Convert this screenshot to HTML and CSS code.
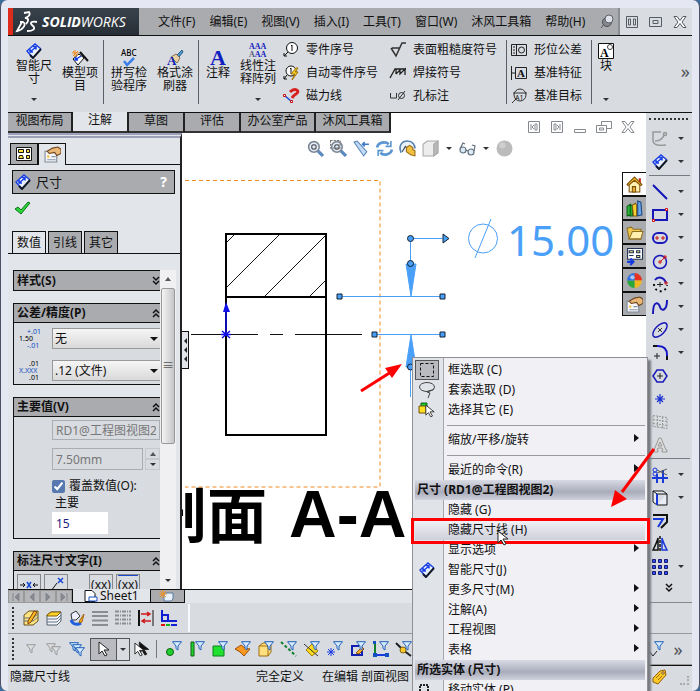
FILE: index.html
```html
<!DOCTYPE html>
<html lang="zh-CN">
<head>
  <meta charset="UTF-8" />
  <title>SOLIDWORKS</title>
  <link rel="stylesheet" href="styles.css">
</head>
<body>
  <svg class="defs" width="0" height="0" aria-hidden="true">
    <symbol id="dim" viewBox="0 0 16 16">
      <path d="M1 8l8-7 6 5-8 9z" fill="#e8f0ff"/>
      <path d="M7 15L1 8l8-7 6 5" fill="none" stroke="#1c40e0" stroke-width="1.500"/>
      <path d="M4 12l3 3 8-9" fill="none" stroke="#101828" stroke-width="2"/>
      <path d="M4 9l6-5M4 6v3h3M7 3.500h3v3" fill="none" stroke="#1840e8" stroke-width="1.500"/>
    </symbol>
    <symbol id="funnel" viewBox="0 0 10 10">
      <path d="M.5.7h9L6 5v4L4 7.500V5z" fill="#d8ecff" stroke="#2060b8"/>
    </symbol>
    <symbol id="funnel-gray" viewBox="0 0 10 10">
      <path d="M.5.7h9L6 5v4L4 7.500V5z" fill="#ddd" stroke="#9a9ca0"/>
    </symbol>
    <symbol id="lens" viewBox="0 0 16 16">
      <path d="M10 10l5 5" stroke="#5c88c0" stroke-width="3"/>
      <circle cx="6.500" cy="6.500" r="5" fill="#e6ecf2" stroke="#7d8998" stroke-width="1.500"/>
      <path d="M4.500 5.500l1-1h2l1 1v2l-1 1h-2l-1-1z" fill="none" stroke="#555b66" stroke-width="1.200"/>
    </symbol>
    <symbol id="pointer" viewBox="0 0 12 16">
      <path d="M1 1v12l3-3 3 5 2-1-3-5h5z" stroke="#222"/>
    </symbol>
    <symbol id="chev" viewBox="0 0 8 10">
      <path d="M1 1l3 3 3-3M1 5l3 3 3-3" fill="none" stroke="#111" stroke-width="1.500"/>
    </symbol>
    <symbol id="hand" viewBox="0 0 16 16">
      <path d="M1 5h11v10H1z" fill="#f5f7fa" stroke="#7c8794"/>
      <path d="M3 9h2v2H3z" fill="#f8c030"/>
      <path d="M7 10h4M3 13h8" stroke="#8896a8"/>
      <path d="M3 5l5-3 5-1 3 2v4l-4 2-2-3-5 1z" fill="#e8b878" stroke="#70441c"/>
    </symbol>
    <symbol id="views" viewBox="0 0 16 16">
      <path d="M.5 1.500h15v13H.5z" fill="#fff" stroke="#111"/>
      <path d="M2.500 3.500h5v3h-5zM10.500 3.500h3v3h-3zM10.500 9.500h3v3h-3zM2.500 12.500l1-3h3l1 3z" fill="#ffe040" stroke="#111"/>
    </symbol>
  </svg>

  <div class="window">
    <header class="titlebar">
      <div class="logo">
        <svg width="22" height="22" viewBox="0 0 22 22" fill="none" stroke="#fff" stroke-width="1.800">
          <path d="M8 2l5-1c2 3-1 5-4 6 4 0 4 3 1 6M4 11l3 0c4 2 0 8-6 9l5-9M21 11c-6-1-8 1-4 4 3 3 0 5-6 5"/>
        </svg>
        <span><b>SOLID</b>WORKS</span>
      </div>
      <nav class="menubar">
        <a href="#">文件(F)</a>
        <a href="#">编辑(E)</a>
        <a href="#">视图(V)</a>
        <a href="#">插入(I)</a>
        <a href="#">工具(T)</a>
        <a href="#">窗口(W)</a>
        <a href="#">沐风工具箱</a>
        <a href="#">帮助(H)</a>
        <button aria-label="固定"><svg width="16" height="16" viewBox="0 0 16 16"><path d="M6 9l-4 5" stroke="#555"/><circle cx="8" cy="8" r="4.500" fill="#85888e" stroke="#4b4e54"/><circle cx="10" cy="5" r="4" fill="#dfe2e8" stroke="#5c6068"/></svg></button>
      </nav>
      <div class="window-buttons">
        <button aria-label="平铺"><svg width="14" height="14" viewBox="0 0 14 14" fill="none" stroke="#565a62"><path d="M1.500 1.500h11v11h-11zM3.500 4h2v6h-2zM8.500 4h2v6h-2z"/></svg></button>
        <button aria-label="还原"><svg width="14" height="14" viewBox="0 0 14 14" fill="none" stroke="#565a62"><path d="M.5 2.500h12v9H.5zM4 5.500h5v3H4z"/></svg></button>
        <button aria-label="关闭"><svg width="14" height="14" viewBox="0 0 14 14"><path d="M1 1.500h3l3 4 3-4h3L9 7l4 5.500h-3l-3-4-3 4H1L5 7z" fill="#fff" stroke="#565a62"/></svg></button>
      </div>
    </header>

    <section class="ribbon">
      <button class="tool tool-wide drop">
        <svg width="16" height="16"><use href="#dim"/></svg>
        <span>智能尺寸</span>
      </button>
      <button class="tool tool-wide low">
        <svg width="18" height="16" viewBox="0 0 18 16"><path d="M2 9l6-5 5 4-6 7z" fill="#fff" stroke="#111"/><path d="M4 10l6-4M5 7l-1 3h3" fill="none" stroke="#1840e8" stroke-width="1.500"/><path d="M9 2l8 9" stroke="#111" stroke-width="2"/><path d="M4 0v7M1 3h7M2 1l5 5M7 1L2 6" stroke="#f08a18"/></svg>
        <span>模型项目</span>
      </button>
      <i class="divider"></i>
      <button class="tool tool-wide low">
        <svg width="18" height="16" viewBox="0 0 18 16"><text x="1" y="6" font-size="8" font-weight="500">ABC</text><path d="M4 11l3 4 7-7" fill="none" stroke="#3d80e8" stroke-width="2.500"/></svg>
        <span>拼写检验程序</span>
      </button>
      <button class="tool tool-wide low">
        <svg width="18" height="16" viewBox="0 0 18 16"><path d="M11 5l5-5 1 2-4 5z" fill="#4c98d0" stroke="#2b628c"/><path d="M5 7l5-3 4 4-3 5z" fill="#e8d0a0" stroke="#88705c"/><text class="serif" x="1" y="15" font-size="13" font-weight="bold" fill="#1020b0">A</text></svg>
        <span>格式涂刷器</span>
      </button>
      <i class="divider"></i>
      <button class="tool low">
        <svg width="18" height="16" viewBox="0 0 18 16"><text class="serif" x="1" y="15" font-size="22" font-weight="bold" fill="#1020c0">A</text></svg>
        <span>注释</span>
      </button>
      <button class="tool tool-wide drop">
        <svg width="18" height="16" viewBox="0 0 18 16"><g class="serif" font-size="8" font-weight="bold"><text x="0" y="6" fill="#1020c0">AAA</text><text x="0" y="14" fill="#555a78">A<tspan fill="#1020c0">AA</tspan></text></g></svg>
        <span>线性注释阵列</span>
      </button>
      <div class="tool-column">
        <button><svg width="16" height="16" viewBox="0 0 16 16"><circle cx="9" cy="6" r="5.500" fill="#fff" stroke="#111"/><path d="M5 10l-4 4M1 11v3h3M8 4l1-1v6" fill="none" stroke="#111"/></svg>零件序号</button>
        <button><svg width="16" height="16" viewBox="0 0 16 16"><circle cx="8" cy="6" r="5" fill="#fff" stroke="#111"/><path d="M4 10l-3 4M1 11v3h3M7 4l1-1v6" fill="none" stroke="#111"/><path d="M13 3l-5 6h4l-3 6 6-8h-3l3-4z" fill="#ffd820" stroke="#a07000"/></svg>自动零件序号</button>
        <button><svg width="16" height="16" viewBox="0 0 16 16"><path d="M7 4c5-5 11-1 6 2-2 1-3 2-4 4" fill="none" stroke="#d82020" stroke-width="3"/><path d="M2 8l6 5" stroke="#1840d8" stroke-width="1.500"/><path d="M.5 6.500h2v2h-2zM7.500 12.500h2v2h-2z" fill="#fff" stroke="#c01010"/></svg>磁力线</button>
      </div>
      <div class="tool-column column-symbols">
        <button><svg width="16" height="16" viewBox="0 0 16 16" fill="none" stroke="#333" stroke-width="1.500"><path d="M1 6l5 8 6-13h4M2 6h8"/></svg>表面粗糙度符号</button>
        <button><svg width="16" height="16" viewBox="0 0 16 16" fill="none" stroke="#222" stroke-width="1.300"><path d="M0 13L5 4h11M6 4v5M6 9l4-4v4l5-5v6"/></svg>焊接符号</button>
        <button><svg width="16" height="16" viewBox="0 0 16 16" fill="none" stroke="#333"><path d="M.5 5v5h6V5M8 12l7-9"/><circle cx="11.500" cy="7.500" r="3"/></svg>孔标注</button>
      </div>
      <i class="divider"></i>
      <div class="tool-column">
        <button><svg width="16" height="16" viewBox="0 0 16 16" fill="none" stroke="#222"><path d="M.5 2.500h15v11H.5zM5.500 2v12M2 5h2M2 8h2M2 11h2" /><circle cx="10.500" cy="8" r="3"/></svg>形位公差</button>
        <button><svg width="16" height="16" viewBox="0 0 16 16" fill="none" stroke="#222"><path d="M4.500 2.500h11v11h-11zM.5 1v14M1 8h3"/><text class="serif" x="6" y="12" font-size="11" font-weight="bold" fill="#111" stroke="none">A</text></svg>基准特征</button>
        <button><svg width="16" height="16" viewBox="0 0 16 16" fill="none" stroke="#333"><circle cx="9" cy="7" r="6"/><path d="M2 5h14M5 11l-4 4"/><text x="4" y="12" font-size="7" fill="#111" stroke="none">A1</text></svg>基准目标</button>
      </div>
      <i class="divider"></i>
      <button class="tool tool-block drop">
        <svg width="16" height="16" viewBox="0 0 16 16"><path d="M.5.500h15v15H.5z" fill="#fff" stroke="#111"/><circle cx="12" cy="4" r="2.500" fill="none" stroke="#444"/><text class="serif" x="2" y="14" font-size="12" font-weight="bold">A</text></svg>
        <span>块</span>
      </button>
      <button class="more" aria-label="更多">»</button>
    </section>

    <div class="middle">
      <div class="document">
        <div class="tab-row">
          <nav class="tabs">
            <a href="#">视图布局</a>
            <a href="#" class="active">注解</a>
            <a href="#">草图</a>
            <a href="#">评估</a>
            <a href="#">办公室产品</a>
            <a href="#">沐风工具箱</a>
          </nav>
          <div class="doc-buttons">
            <button aria-label="左窗格"><svg width="14" height="14" viewBox="0 0 14 14" fill="none" stroke="#858990"><path d="M1.500 1.500h11v11h-11zM4 4v6M8 4h2v6H8zM7 5L5 7l2 2"/></svg></button>
            <button aria-label="右窗格"><svg width="14" height="14" viewBox="0 0 14 14" fill="none" stroke="#858990"><path d="M1.500 1.500h11v11h-11zM4 4h2v6H4zM10 4v6M7 5l2 2-2 2"/></svg></button>
            <button aria-label="最小化"><svg width="14" height="14" viewBox="0 0 14 14" fill="none" stroke="#858990"><path d="M1.500 9.500h11v3h-11z"/></svg></button>
            <button aria-label="还原"><svg width="16" height="14" viewBox="0 0 16 14" fill="none" stroke="#858990"><path d="M5.500 5V1.500h10v7H11M.5 5.500h10v7H.5zM3.500 8h4v2h-4z"/></svg></button>
            <button aria-label="关闭"><svg width="14" height="14" viewBox="0 0 14 14" fill="none" stroke="#858990"><path d="M1 1.500h3l3 4 3-4h3L9 7l4 5.500h-3l-3-4-3 4H1L5 7z"/></svg></button>
          </div>
        </div>

        <div class="workspace">
          <aside class="panel">
            <div class="manager-tabs">
              <button aria-label="特征树"><svg width="16" height="16"><use href="#views"/></svg></button>
              <button class="active" aria-label="属性"><svg width="17" height="17"><use href="#hand"/></svg></button>
            </div>
            <div class="panel-title">
              <svg width="16" height="16"><use href="#dim"/></svg>
              <span>尺寸</span>
              <button aria-label="帮助">?</button>
            </div>
            <button class="ok" aria-label="确定"><svg width="17" height="14" viewBox="0 0 17 14"><path d="M1 8l3-2 3 3 7-8 2 1-9 11z" fill="#28d838" stroke="#107018"/></svg></button>
            <div class="property-tabs">
              <button class="active">数值</button>
              <button>引线</button>
              <button>其它</button>
            </div>
            <div class="scroller">
              <div class="groups">
                <section class="group">
                  <h3>样式(S)<svg width="8" height="10"><use href="#chev"/></svg></h3>
                </section>
                <section class="group">
                  <h3>公差/精度(P)<svg class="up" width="8" height="10"><use href="#chev"/></svg></h3>
                  <div class="field">
                    <svg width="24" height="22" viewBox="0 0 24 22" font-size="7"><text x="8" y="6" fill="#1050c0">+.01</text><text x="0" y="13">1.50</text><text x="8" y="20" fill="#1050c0">-.01</text></svg>
                    <select aria-label="公差类型"><option>无</option></select>
                  </div>
                  <div class="field">
                    <svg width="24" height="22" viewBox="0 0 24 22" font-size="7"><text x="10" y="6">.01</text><text x="0" y="13" fill="#1050c0">X.XXX</text><text x="10" y="20">.01</text></svg>
                    <select aria-label="单位精度"><option>.12 (文件)</option></select>
                  </div>
                </section>
                <section class="group">
                  <h3>主要值(V)<svg class="up" width="8" height="10"><use href="#chev"/></svg></h3>
                  <div class="values">
                    <input type="text" class="disabled" aria-label="名称" value="RD1@工程图视图2" disabled>
                    <div class="spin">
                      <input type="text" class="disabled" aria-label="尺寸值" value="7.50mm" disabled>
                      <div class="spin-buttons">
                        <button aria-label="增加" disabled><i class="tri tri-up"></i></button>
                        <button aria-label="减少" disabled><i class="tri"></i></button>
                      </div>
                    </div>
                    <label class="check"><input type="checkbox" checked>覆盖数值(O):</label>
                    <label class="main-label" for="mainValue">主要</label>
                    <input type="text" class="main-value" id="mainValue" value="15">
                  </div>
                </section>
                <section class="group">
                  <h3>标注尺寸文字(I)<svg class="up" width="8" height="10"><use href="#chev"/></svg></h3>
                  <div class="text-buttons">
                    <button aria-label="居中"><svg width="18" height="12" viewBox="0 0 18 12"><path d="M0 6h5M3 4l2 2-2 2M18 6h-5M15 4l-2 2 2 2" fill="none" stroke="#111"/><path d="M7 3l4 6M11 3L7 9" stroke="#1848d0" stroke-width="1.500"/></svg></button>
                    <button aria-label="偏移"><svg width="18" height="16" viewBox="0 0 18 16"><path d="M1 14h15M4 14L10 6M3 12l-2 2 2 2" fill="none" stroke="#111"/><path d="M11 1l5 5M16 1l-5 5" stroke="#1848d0" stroke-width="1.500"/></svg></button>
                    <button class="gap">(xx)</button>
                    <button class="boxed">(xx)</button>
                  </div>
                </section>
              </div>
              <div class="scrollbar">
                <i class="tri tri-up"></i>
                <div class="thumb">≡</div>
                <i class="tri"></i>
              </div>
            </div>
          </aside>

          <div class="canvas">
            <svg class="drawing" viewBox="182 133 464 455" width="464" height="455">
              <path d="M185 180.500h195v306.500H185" fill="none" stroke="#f08a20" stroke-dasharray="4 3"/>
              <text class="caption" x="147" y="538" font-size="60">剖面</text>
              <text class="caption-latin" x="289" y="537" font-size="66">A-A</text>
              <g stroke="#111" fill="none">
                <path d="M226 243l9-9M226 288l54-54M264 297l62-62M309 297l17-17"/>
                <path d="M191 334.500h67M270 334.500h13M295 334.500h67"/>
                <path d="M226 234h100v201H226zM226 297h100" stroke="#000" stroke-width="2"/>
              </g>
              <path d="M226 336v-24M222 331l8 7M230 331l-8 7M221 334.500h10" stroke="#1010e8" stroke-width="1.500"/>
              <path d="M223 312l3-10 4 10z" fill="#1010e8"/>
              <g stroke="#4aa0f8" fill="#4aa0f8">
                <path d="M410.500 238.500h32M410.500 238v26M340 296.500h103M375 334.500h68M410.500 366v31" fill="none"/>
                <path d="M406 264h10l-5 32zM411 335l5 32h-10z"/>
                <g stroke="#102030">
                  <path d="M337 294h5v5h-5zM440 294h5v5h-5zM372 332h5v5h-5zM440 332h5v5h-5zM443 234l6 4.500-6 4.500z"/>
                  <circle cx="410.500" cy="238.500" r="3"/><circle cx="410.500" cy="263.500" r="3"/><circle cx="410.500" cy="367" r="3"/>
                </g>
                <g fill="none"><circle cx="483" cy="238.500" r="14.500"/><path d="M475 258l16-39"/></g>
              </g>
              <text class="dimension" x="507" y="256" font-size="42" fill="#4aa0f8">15.00</text>
            </svg>
            <button class="splitter" aria-label="折叠"><i></i><i></i><i></i></button>
            <div class="view-tools">
              <button aria-label="整屏显示"><svg width="17" height="17"><use href="#lens"/></svg></button>
              <button aria-label="局部放大"><svg width="17" height="17" viewBox="0 0 16 16"><use href="#lens"/><path d="M.5.500h9v7h-9z" fill="none" stroke="#777" stroke-dasharray="2 1"/></svg></button>
              <button aria-label="上一视图"><svg width="17" height="17" viewBox="0 0 16 16"><path d="M1 2l3-1 9 10-3 4z" fill="#c2daf4" stroke="#5b88b8"/><path d="M15 4H9M11 2L9 4l2 2" fill="none" stroke="#3f78c8" stroke-width="1.500"/></svg></button>
              <button aria-label="重建"><svg width="17" height="17" viewBox="0 0 16 16" fill="none" stroke="#5d96d0" stroke-width="2.500"><path d="M1 7c1-5 8-6 11-3M15 9c-1 5-8 6-11 3"/><path d="M14 1v5H9M2 15v-5h5" stroke-width="1.500"/></svg></button>
              <button aria-label="锁定视图"><svg width="17" height="17" viewBox="0 0 16 16"><path d="M2 12C-1 5 3 1 8 1s7 4 7 7" fill="#e9f1fa" stroke="#5580b0" stroke-width="1.500"/><path d="M3 11l3-5 3 3" fill="none" stroke="#345"/><path d="M7 7l3-2 3 2v2l2 1v5l-4-1-4-3z" fill="#f2c040" stroke="#9a6d10"/></svg></button>
              <button aria-label="显示样式"><svg width="17" height="17" viewBox="0 0 16 16" stroke="#aaa"><path d="M1 4l4-3h10v11l-4 3H1z" fill="#ededed"/><path d="M11 4l4-3v11l-4 3z" fill="#b8b8b8"/></svg></button>
              <i class="tri"></i>
              <button aria-label="隐藏显示"><svg width="17" height="14" viewBox="0 0 17 14" fill="#dceaf5" stroke="#60707f" stroke-width="1.200"><circle cx="4" cy="8" r="3"/><circle cx="12" cy="10" r="3"/><path d="M7 8l2 1M1 7l3-6 2 1M15 9l1-5-3-1" fill="none"/></svg></button>
              <i class="tri"></i>
              <button aria-label="外观"><svg width="17" height="17" viewBox="0 0 16 16"><circle cx="8" cy="8" r="7.500" fill="#bbb"/><circle cx="6" cy="5" r="3" fill="#cecece"/></svg></button>
            </div>
            <div class="task-pane">
              <button class="active" aria-label="资源"><svg width="17" height="17" viewBox="0 0 16 16"><path d="M12 2h2v5h-2z" fill="#c02818"/><path d="M3 8v7h10V8L8 3z" fill="#fff2b0" stroke="#80500c"/><path d="M1 8l7-7 7 7-1 1-6-5-6 5z" fill="#f8c828" stroke="#80500c"/><path d="M6 10h3v5H6z" fill="#e8b038" stroke="#80500c"/></svg></button>
              <button aria-label="设计库"><svg width="17" height="17" viewBox="0 0 16 16"><path d="M1 6l3-2v10l-3 1zM4 4l2 2v9l-3 0" fill="#28b838" stroke="#106018"/><path d="M6 5l3-2 1 2v10H7z" fill="#f8d030" stroke="#806010"/><path d="M11 1l3 1 1 12-4 1z" fill="#68a8e8" stroke="#204880"/></svg></button>
              <button aria-label="文件探索器"><svg width="17" height="17" viewBox="0 0 16 16"><path d="M1 4l4-1 2 2h7v9H3z" fill="#f0c850" stroke="#907020"/><path d="M3 14L6 7h10l-2 7z" fill="#fff0b0" stroke="#907020"/></svg></button>
              <button aria-label="视图调色板"><svg width="17" height="17" viewBox="0 0 16 16"><path d="M1.500.500h14v10h-14z" fill="#fff" stroke="#203050"/><path d="M3 2.500h4v2H3zM10 2.500h3v2h-3zM10 7h3v2h-3zM3 7h4" fill="#fff080" stroke="#203050"/><path d="M1 13h6M4 10l3 3-3 3" fill="none" stroke="#1438e0" stroke-width="2"/></svg></button>
              <button aria-label="外观"><svg width="17" height="17" viewBox="0 0 16 16"><path d="M8 8V1a7 7 0 0 1 7 7z" fill="#e83020"/><path d="M8 8h7a7 7 0 0 1-7 7z" fill="#f0b820"/><path d="M8 8v7a7 7 0 0 1-7-7z" fill="#28a838"/><path d="M8 8H1a7 7 0 0 1 7-7z" fill="#3070e0"/><circle cx="6" cy="5" r="2" fill="#fff" opacity=".6"/></svg></button>
              <button aria-label="自定义属性"><svg width="17" height="17"><use href="#hand"/></svg></button>
            </div>
          </div>
        </div>

        <div class="sheet-bar">
          <div class="sheet-nav">
            <button aria-label="第一页"><svg width="10" height="8" viewBox="0 0 10 8"><path d="M2 0v8M8 0L4 4l4 4z"/></svg></button>
            <button aria-label="上一页"><svg width="10" height="8" viewBox="0 0 10 8"><path d="M7 0L3 4l4 4z"/></svg></button>
            <button aria-label="下一页"><svg width="10" height="8" viewBox="0 0 10 8"><path d="M3 0l4 4-4 4z"/></svg></button>
            <button aria-label="最后一页"><svg width="10" height="8" viewBox="0 0 10 8"><path d="M8 0v8M2 0l4 4-4 4z"/></svg></button>
          </div>
          <a href="#" class="sheet"><svg width="14" height="12" viewBox="0 0 14 12"><path d="M1 .5h7l3 3v8H1z" fill="#fff" stroke="#111"/><path d="M5 7h8v4H5z" fill="#fff" stroke="#1850c0"/></svg>Sheet1</a>
          <button class="add-sheet" aria-label="添加图纸"><svg width="16" height="12" viewBox="0 0 16 12"><path d="M5 3h9v6l-2 2H5z" fill="#e8f0fa" stroke="#5a7ba0"/><path d="M4 0v8M0 4h8M1 1l6 6M7 1L1 7" stroke="#f09018"/></svg></button>
        </div>
      </div>

      <aside class="sketch-bar">
        <div class="grip"></div>
        <div class="sketch-row"><button aria-label="草图"><svg viewBox="0 0 16 16" fill="none" stroke="#999" stroke-width="1.500"><path d="M9 1H1v8c0 5 5 6 13 5M3 10c6 0 8-3 9-6"/><circle cx="13" cy="3" r="1.500"/></svg></button><i class="tri"></i></div>
        <div class="sketch-row"><button aria-label="智能尺寸"><svg><use href="#dim"/></svg></button><i class="tri"></i></div>
        <hr>
        <div class="sketch-row"><button aria-label="直线"><svg viewBox="0 0 16 16"><path d="M1 1l14 14" stroke="#1010b8" stroke-width="2"/></svg></button><i class="tri"></i></div>
        <div class="sketch-row"><button aria-label="矩形"><svg viewBox="0 0 16 16" fill="none"><path d="M1 3h14v10H1z" stroke="#1818b8" stroke-width="2"/><path d="M.5 12.500h2v2h-2zM13.500 1.500h2v2h-2z" fill="#fff" stroke="#d01010"/></svg></button><i class="tri"></i></div>
        <div class="sketch-row"><button aria-label="槽口"><svg viewBox="0 0 16 16" fill="none"><rect x="1" y="3" width="14" height="10" rx="5" stroke="#1818b8" stroke-width="2"/><path d="M4 7h2v2H4zM10 7h2v2h-2z" stroke="#d01010"/></svg></button><i class="tri"></i></div>
        <div class="sketch-row"><button aria-label="圆"><svg viewBox="0 0 16 16" fill="none"><circle cx="8" cy="9" r="6.500" stroke="#1818b8" stroke-width="1.500"/><path d="M7 8h2v2H7zM12 3h2v2h-2zM9 8l3-3" stroke="#d01010"/></svg></button><i class="tri"></i></div>
        <div class="sketch-row"><button aria-label="圆弧"><svg viewBox="0 0 16 16" fill="none"><path d="M3 4c3-4 9-3 11 3" stroke="#1818b8" stroke-width="2"/><path d="M2 8c0 9 12 10 13 1" stroke="#111" stroke-width="2" stroke-dasharray="2 3"/><path d="M8 6v5M5 8.500h6" stroke="#222"/><path d="M13 6h2v2h-2z" stroke="#d01010"/></svg></button><i class="tri"></i></div>
        <div class="sketch-row"><button aria-label="样条曲线"><svg viewBox="0 0 16 16"><path d="M1 15C1 0 7 4 8 8s7 5 7-7" fill="none" stroke="#1818b8" stroke-width="2"/></svg></button><i class="tri"></i></div>
        <div class="sketch-row"><button aria-label="椭圆"><svg viewBox="0 0 16 16" fill="none"><ellipse cx="8" cy="8" rx="9" ry="4.500" transform="rotate(-45 8 8)" stroke="#1818b8" stroke-width="1.500"/><path d="M6 6l4 4M10 6l-4 4" stroke="#333"/></svg></button><i class="tri"></i></div>
        <div class="sketch-row"><button aria-label="圆角"><svg viewBox="0 0 16 16" fill="none"><path d="M1 1h5c6 0 9 3 9 9v5" stroke="#1818c8" stroke-width="2"/><path d="M1 1h4M15 11v4" stroke="#111" stroke-width="2"/><path d="M5 8v6M2 11h6" stroke="#222"/></svg></button><i class="tri"></i></div>
        <div class="sketch-row"><button aria-label="多边形"><svg viewBox="0 0 16 16" fill="none"><path d="M1 8l4-6h6l4 6-4 6H5z" stroke="#1818b8" stroke-width="1.500"/><path d="M8 5v6M5 8h6" stroke="#222"/></svg></button></div>
        <div class="sketch-row"><button aria-label="点"><svg viewBox="0 0 16 16"><path d="M8 3v10M3 8h10M5 5l6 6M11 5l-6 6" stroke="#1830d0" stroke-width="1.200"/></svg></button></div>
        <div class="sketch-row"><button aria-label="基准面"><svg viewBox="0 0 16 16"><path d="M1 1.500l14 2v11l-14-2zM5.500 2v11M10.500 3v11M1 5.500l14 2M1 9.500l14 2" fill="none" stroke="#999" stroke-dasharray="2 1"/></svg></button></div>
        <div class="sketch-row"><button aria-label="文字"><svg viewBox="0 0 16 16"><path d="M7 1h2l5 12h1v2h-5v-2h1l-1-2H6l-1 2h1v2H1v-2h1zM8 5L6 9h4z" fill="#ddd" stroke="#999"/></svg></button></div>
        <hr>
        <div class="sketch-row"><button aria-label="剪裁"><svg viewBox="0 0 16 16" fill="none"><path d="M0 11h16M11 3v13M5 7v9" stroke="#1838d8" stroke-width="2"/><path d="M5 6l10-4M5 3l10 5" stroke="#555"/><circle cx="3" cy="3" r="2" stroke="#1838d8"/><circle cx="3" cy="7" r="2" stroke="#1838d8"/></svg></button><i class="tri"></i></div>
        <div class="sketch-row"><button aria-label="转换实体"><svg viewBox="0 0 16 16"><path d="M1 1l4 3v11l-4-3zM1 1h10l4 3H5M15 4v11H5" fill="#e8edf5" stroke="#111"/><path d="M5 4v11" stroke="#1838d8" stroke-width="2"/></svg></button><i class="tri"></i></div>
        <div class="sketch-row"><button aria-label="等距"><svg viewBox="0 0 16 16" fill="none" stroke-width="2"><path d="M1 2h14v7l-6 6" stroke="#111"/><path d="M1 6h10l-5 8" stroke="#1838d8"/></svg></button></div>
        <div class="sketch-row"><button aria-label="镜向"><svg viewBox="0 0 16 16" fill="none" stroke-width="1.500"><path d="M6 2c-1 4-3 8-5 12h5z" stroke="#111"/><path d="M10 2c1 4 3 8 5 12h-5z" stroke="#1838d8"/><path d="M8 0v16" stroke="#111" stroke-dasharray="3 1"/></svg></button></div>
        <div class="sketch-row"><button aria-label="阵列"><svg viewBox="0 0 16 16" fill="#3050f0" stroke="#181870"><path d="M.5.500h3v3h-3zM6.500.500h3v3h-3zM12.500.500h3v3h-3zM.5 6.500h3v3h-3zM6.500 6.500h3v3h-3zM12.500 6.500h3v3h-3zM.5 12.500h3v3h-3zM6.500 12.500h3v3h-3zM12.500 12.500h3v3h-3z"/></svg></button><i class="tri"></i></div>
        <button class="more-down" aria-label="更多"><svg width="8" height="10"><use href="#chev"/></svg></button>
      </aside>
    </div>

    <div class="toolbar format-bar">
      <i class="vgrip"></i>
      <button aria-label="图层属性"><svg viewBox="0 0 16 16"><path d="M1 5l5-4h9v10l-5 4H1z" fill="#ffe480" stroke="#66531c"/><path d="M1 8h9l5-4M1 11h9l5-4" fill="none" stroke="#607080"/><path d="M5 11L11 1l3 1-6 10-3 2z" fill="#f8b820" stroke="#804010"/></svg></button>
      <button aria-label="图层"><svg viewBox="0 0 16 16"><path d="M1 5l4-3h10v9l-4 4H1z" fill="#f2f5fa" stroke="#50606e"/><path d="M1 5l4-3h10l-4 4H1z" fill="#ffd028" stroke="#7d5c0c"/><path d="M1 9h10l4-4M1 12h10l4-4" fill="none" stroke="#607080"/></svg></button>
      <button aria-label="线色"><svg viewBox="0 0 16 16"><path d="M2 4l5-3 4 5-4 4H3z" fill="#eef" stroke="#333"/><path d="M2 10c2 5 7 5 10 3" fill="none" stroke="#2060e0" stroke-width="3"/><path d="M15 4l-4 6-1 3 3-1z" fill="#f8b020" stroke="#a06010"/></svg></button>
      <button aria-label="线粗"><svg viewBox="0 0 16 16"><path d="M0 2h16M0 6h16M0 10.500h16M0 15h16" stroke="#8b8d92" stroke-width="2"/></svg></button>
      <button aria-label="线型"><svg viewBox="0 0 16 16"><path d="M0 1.500h16M0 5.500h16M0 9.500h16M0 13.500h16" stroke="#8b8d92" stroke-width="2" stroke-dasharray="4 1 1 1"/></svg></button>
      <button aria-label="隐藏边线"><svg viewBox="0 0 16 16"><path d="M1 0v16" stroke="#111" stroke-width="2"/><path d="M15 0v16" stroke="#777" stroke-width="2"/><path d="M3 4h9M9 2l3 2-3 2M13 11H4M7 9l-3 2 3 2" fill="none" stroke="#d01818" stroke-width="1.500"/></svg></button>
      <button aria-label="颜色显示"><svg viewBox="0 0 16 16"><path d="M1 0v12M1 11h15M1 5h6v6" fill="none" stroke="#1020d0" stroke-width="2"/><path d="M0 15h4" stroke="#e01010" stroke-width="2"/><path d="M5 15h4" stroke="#10b020" stroke-width="2"/><path d="M10 15h6" stroke="#1020d0" stroke-width="2"/></svg></button>
      <i class="bar-divider"></i>
    </div>

    <div class="toolbar filter-bar">
      <i class="vgrip"></i>
      <button aria-label="过滤器"><svg viewBox="0 0 16 16"><use href="#funnel-gray" x="3" y="3" width="10" height="10"/></svg></button>
      <button aria-label="清除过滤"><svg viewBox="0 0 16 16"><use href="#funnel-gray" x="0" y="2" width="10" height="10"/><use href="#funnel-gray" x="5" y="5" width="10" height="10"/></svg></button>
      <button aria-label="所有过滤"><svg viewBox="0 0 16 16"><use href="#funnel" x="0" y="1" width="10" height="10"/><use href="#funnel" x="3" y="3" width="10" height="10"/><use href="#funnel" x="6" y="6" width="10" height="10"/></svg></button>
      <div class="select-tool"><button aria-label="选择"><svg viewBox="0 0 12 16" fill="#fff"><use href="#pointer"/></svg></button><button class="arrow" aria-label="选择方式"><i class="tri"></i></button></div>
      <button aria-label="放大选择"><svg viewBox="0 0 16 16"><use href="#pointer" x="4" y="0" width="12" height="15" fill="#111"/><use href="#pointer" x="0" y="1" width="11" height="15" fill="#fff"/></svg></button>
      <i class="bar-divider small"></i>
      <button aria-label="过滤顶点"><svg viewBox="0 0 16 16"><circle cx="4" cy="11" r="3.500" fill="#20d030" stroke="#106010"/><use href="#funnel" x="6" width="10" height="10"/></svg></button>
      <button aria-label="过滤边线"><svg viewBox="0 0 16 16"><path d="M2 1h3v14H2z" fill="#20d030" stroke="#106010"/><use href="#funnel" x="6" width="10" height="10"/></svg></button>
      <button aria-label="过滤面"><svg viewBox="0 0 16 16"><path d="M1 5h11v10H1z" fill="#20e030" stroke="#108018"/><use href="#funnel" x="6" width="10" height="10"/></svg></button>
      <button aria-label="过滤曲面"><svg viewBox="0 0 16 16"><path d="M0 8l6-4 4 3 5 1-6 7-4-4z" fill="#f89820" stroke="#a05010"/><use href="#funnel" x="6" width="10" height="10"/></svg></button>
      <button aria-label="过滤实体"><svg viewBox="0 0 16 16"><path d="M1 5l4-3h8v9l-3 4H1zM1 5h9v10" fill="#ffe080" stroke="#a06c10"/><use href="#funnel" x="6" width="10" height="10"/></svg></button>
      <button aria-label="过滤基准轴"><svg viewBox="0 0 16 16"><path d="M0 1l15 14" stroke="#108030" stroke-width="2" stroke-dasharray="3 2"/><use href="#funnel" x="6" width="10" height="10"/></svg></button>
      <button aria-label="过滤基准面"><svg viewBox="0 0 16 16"><path d="M2 9l6-6 6 7-6 5z" fill="#f8d820" stroke="#a07c10"/><path d="M0 3l14 12" stroke="#333"/><use href="#funnel" x="6" width="10" height="10"/></svg></button>
      <button aria-label="过滤草图点"><svg viewBox="0 0 16 16"><path d="M4 7v8M0 11h8M1 8l6 6M7 8l-6 6" stroke="#1838e0"/><use href="#funnel" x="6" width="10" height="10"/></svg></button>
      <button aria-label="过滤草图"><svg viewBox="0 0 16 16"><path d="M9 5H2v9h10v-4" fill="none" stroke="#1020b0" stroke-width="2"/><path d="M6 12l6-6 2 2-5 5z" fill="#f8b030" stroke="#905010"/><use href="#funnel" x="6" width="10" height="10"/></svg></button>
      <button aria-label="过滤中心线"><svg viewBox="0 0 16 16"><path d="M2 2v12h13" fill="none" stroke="#108030" stroke-width="2"/><path d="M4 14h11" stroke="#1838e0" stroke-width="2"/><path d="M0 0h3v3H0zM0 12h4v4H0zM12 12h4v4h-4z" fill="#1050c0"/><use href="#funnel" x="6" width="10" height="10"/></svg></button>
      <button aria-label="过滤尺寸"><svg viewBox="0 0 16 16"><path d="M0 2l7 7 8 6" stroke="#222" stroke-width="2"/><circle cx="7" cy="9" r="3" fill="#f8c828" stroke="#806010"/><use href="#funnel" x="6" width="10" height="10"/></svg></button>
      <div class="filter-end">
        <button aria-label="过滤焊缝"><svg viewBox="0 0 16 16"><path d="M1 1v9l4 5 4-5" fill="none" stroke="#222"/><use href="#funnel" x="6" width="10" height="10"/></svg></button>
        <button class="more" aria-label="更多">»</button>
      </div>
    </div>

    <footer class="status">
      <span class="hint">隐藏尺寸线</span>
      <span class="state">完全定义</span>
      <span>在编辑 剖面视图</span>
      <div class="status-end">
        <button aria-label="标签"><svg width="16" height="16" viewBox="0 0 16 16"><path d="M2 9l7-7 5-1 1 5-8 9-5-2z" fill="#f8c828" stroke="#9a6008"/><circle cx="12" cy="4" r="1.200" fill="#fff" stroke="#805010"/><path d="M5 9l4-4M7 11l4-4" stroke="#a87010"/></svg></button>
        <i class="resize"></i>
      </div>
    </footer>

    <div class="context-menu">
      <button class="item"><span class="menu-icon pressed"><svg width="16" height="16" viewBox="0 0 16 16"><path d="M1.500 1.500h13v13h-13z" fill="none" stroke="#111" stroke-dasharray="3 2"/></svg></span>框选取 (C)</button>
      <button class="item"><span class="menu-icon"><svg width="18" height="16" viewBox="0 0 18 16" fill="none" stroke="#444"><ellipse cx="9" cy="5" rx="7.500" ry="4.500"/><path d="M16 7c-2 2-6 1-7 3l3 1-2 5"/></svg></span>套索选取 (D)</button>
      <button class="item"><span class="menu-icon"><svg width="18" height="16" viewBox="0 0 18 16"><path d="M3 1h6v7H3z" fill="#20c830" stroke="#106018"/><path d="M1 4h7v7H1z" fill="#ffe020" stroke="#705010"/><use href="#pointer" x="7" y="2" width="10" height="14" fill="#fff"/></svg></span>选择其它 (E)</button>
      <hr>
      <button class="item sub"><span class="menu-icon"></span>缩放/平移/旋转</button>
      <hr>
      <button class="item sub"><span class="menu-icon"></span>最近的命令(R)</button>
      <h4>尺寸 (RD1@工程图视图2)</h4>
      <button class="item"><span class="menu-icon"></span>隐藏 (G)</button>
      <button class="item hover"><span class="menu-icon"></span>隐藏尺寸线 (H)</button>
      <button class="item sub"><span class="menu-icon"></span>显示选项</button>
      <button class="item"><span class="menu-icon"><svg width="16" height="16"><use href="#dim"/></svg></span>智能尺寸(J)</button>
      <button class="item sub"><span class="menu-icon"></span>更多尺寸(M)</button>
      <button class="item sub"><span class="menu-icon"></span>注解(A)</button>
      <button class="item sub"><span class="menu-icon"></span>工程视图</button>
      <button class="item sub"><span class="menu-icon"></span>表格</button>
      <h4>所选实体 (尺寸)</h4>
      <button class="item"><span class="menu-icon"><svg width="18" height="16" viewBox="0 0 18 16"><path d="M2 3h8v7H2zM10 12h6" fill="none" stroke="#222" stroke-width="2" stroke-dasharray="2 1"/></svg></span>移动实体 (P)</button>
      <!-- red callouts and the mouse pointer -->
      <svg class="callouts" viewBox="355 357 300 200" width="300" height="200">
        <path d="M412.500 519.500h236v23h-236z" fill="none" stroke="#f00" stroke-width="3"/>
        <path d="M361 391l30-19M654 449l-32 43" stroke="#f00" stroke-width="3"/>
        <path d="M402 364l-10 14-7-10zM611 507l4-17 12 9z" fill="#f00"/>
        <use href="#pointer" x="497" y="529" width="12" height="18" fill="#fff"/>
      </svg>
    </div>
  </div>
</body>
</html>
```
FILE: styles.css
```css
* {
  box-sizing: border-box;
}

body {
  margin: 0;
  background: #3a6ea0;
  font-family: "Noto Sans", "Noto Sans CJK SC", sans-serif;
  font-size: 12px;
  line-height: 16px;
  color: #111;
}

.defs {
  position: absolute;
}

button {
  display: flex;
  align-items: center;
  justify-content: center;
  margin: 0;
  padding: 0;
  border: 0;
  background: none;
  color: inherit;
  font: inherit;
  cursor: pointer;
}

a {
  color: inherit;
  text-decoration: none;
  white-space: nowrap;
}

svg {
  display: block;
  flex: none;
  overflow: visible;
}

.serif {
  font-family: "Liberation Serif", serif;
}

.tri {
  width: 0;
  height: 0;
  border: 3px solid transparent;
  border-top-color: #333;
  border-bottom: 0;
}

.tri-up {
  border-top: 0;
  border-bottom: 4px solid #555;
}

.window {
  position: relative;
  display: flex;
  flex-direction: column;
  height: 100vh;
  padding: 8px 7px 0;
  overflow: hidden;
  border-left: 1px solid #4b5063;
  border-right: 1px solid #4b5063;
  border-radius: 7px;
  background: #e5e7f2;
}

/* title bar */

.titlebar {
  display: flex;
  flex: none;
  height: 28px;
  border-bottom: 1px solid #111;
  background: #a9abaf;
}

.logo {
  display: flex;
  align-items: center;
  gap: 4px;
  width: 131px;
  padding-left: 3px;
  border-left: 5px solid #dd2c1c;
  background: linear-gradient(#39424c, #272e36);
  color: #fff;
  font-family: "Open Sans", sans-serif;
  font-style: italic;
  font-size: 14px;
}

.menubar {
  display: flex;
  flex: 1;
  align-items: center;
  gap: 14px;
  padding-left: 19px;
}

.window-buttons {
  display: flex;
  align-items: center;
  justify-content: space-around;
  width: 74px;
  border-left: 2px solid #8b8d92;
  background: #d9dce1;
}

/* ribbon */

.ribbon {
  display: flex;
  flex: none;
  height: 77px;
  padding-left: 3px;
  border-bottom: 1px solid #111;
  background: #d8dbe0;
}

.divider {
  width: 1px;
  margin: 4px 2px 8px 0;
  background: #5c5f66;
}

.tool {
  flex-direction: column;
  justify-content: flex-start;
  width: 34px;
  padding-top: 7px;
  line-height: 13px;
}

.tool.low {
  padding-top: 14px;
}

.tool-wide {
  width: 46px;
}

.tool-wide span {
  width: 36px;
}

.tool-block {
  width: 24px;
}

.drop::after {
  content: "";
  margin-top: auto;
  margin-bottom: 11px;
  border: 3px solid transparent;
  border-top-color: #333;
  border-bottom: 0;
}

.tool-column {
  display: flex;
  flex-direction: column;
  gap: 7px;
  padding: 6px 9px 0 2px;
}

.tool-column button {
  justify-content: flex-start;
  gap: 7px;
  white-space: nowrap;
}

.column-symbols {
  padding-left: 3px;
}

.more {
  margin-left: auto;
  padding: 0 2px;
  color: #4d5056;
  font-size: 18px;
}

.ribbon .more {
  margin-bottom: 6px;
}

/* document area */

.middle {
  display: flex;
  flex: 1;
  min-height: 0;
}

.document {
  display: flex;
  flex: 1;
  flex-direction: column;
  min-width: 0;
}

.tab-row {
  display: flex;
  flex: none;
  height: 20px;
  background: #fff;
}

.tabs {
  display: flex;
}

.tabs a {
  width: 56px;
  border-right: 2px solid #222;
  border-bottom: 2px solid #333;
  background: #a9abaf;
  text-align: center;
}

.tabs a:first-child {
  width: 65px;
}

.tabs a:nth-child(n+5) {
  width: 75px;
}

.tabs .active {
  margin-top: -1px;
  background: #e2e5e9;
}

.doc-buttons {
  display: flex;
  gap: 9px;
  margin-left: auto;
  padding: 7px 11px 0 0;
}

.workspace {
  display: flex;
  flex: 1;
  min-height: 0;
}

.panel {
  display: flex;
  flex: none;
  flex-direction: column;
  width: 174px;
  border-top: 5px double #9da1b8;
  border-right: 2px solid #222;
  background: #e2e5e9;
}

.manager-tabs {
  display: flex;
  height: 27px;
  padding: 5px 0 0 2px;
  border-bottom: 1px solid #111;
}

.manager-tabs button {
  width: 28px;
  height: 22px;
  border: 1px solid #111;
  background: #a9abaf;
}

.manager-tabs .active {
  border-bottom: 0;
  background: #e2e5e9;
}

.panel-title {
  display: flex;
  align-items: center;
  gap: 5px;
  height: 24px;
  margin: 5px 5px 0 4px;
  padding: 0 7px 0 2px;
  border: 1px solid #111;
  background: #a9abaf;
  font-size: 13px;
}

.panel-title button {
  margin-left: auto;
  color: #fff;
  font-size: 14px;
  font-weight: bold;
}

.ok {
  align-self: flex-start;
  height: 24px;
  margin: 2px 0 0 6px;
}

.property-tabs {
  display: flex;
  gap: 2px;
  margin-top: 11px;
  padding-left: 4px;
  border-bottom: 1px solid #111;
}

.property-tabs button {
  width: 34px;
  height: 22px;
  border: 1px solid #111;
  border-bottom: 0;
  background: #a9abaf;
}

.property-tabs .active {
  margin-bottom: -1px;
  background: #e2e5e9;
}

.scroller {
  display: flex;
  flex: 1;
  min-height: 0;
  margin: 16px 4px 0 5px;
  overflow: hidden;
}

.groups {
  flex: 1;
  min-width: 0;
  overflow: hidden;
}

.group {
  margin-bottom: 12px;
  border: 1px solid #111;
  border-right: 0;
  background: #d8dbe0;
}

.group h3 {
  display: flex;
  align-items: center;
  justify-content: space-between;
  height: 19px;
  margin: 0;
  padding-left: 3px;
  background: #a9abaf;
  font-size: 12px;
  font-weight: bold;
}

.group h3:not(:only-child) {
  border-bottom: 1px solid #111;
}

.up {
  transform: rotate(180deg);
}

.field {
  position: relative;
  display: flex;
  gap: 9px;
  padding: 5px 0 5px 5px;
}

.field:last-child {
  padding-bottom: 2px;
}

.field select {
  flex: none;
  width: 118px;
  height: 21px;
  padding: 0 2px;
  border: 1px solid #999;
  background: linear-gradient(#f6f6f6, #d9d9d9);
  color: #111;
  font: inherit;
  appearance: none;
}

.field::after {
  content: "";
  position: absolute;
  top: 14px;
  right: 2px;
  border: 4px solid transparent;
  border-top-color: #111;
  border-bottom: 0;
}

.values {
  display: flex;
  flex-direction: column;
  padding: 3px 0 4px 38px;
}

.values input[type="text"] {
  width: 100%;
  height: 20px;
  padding: 0 3px;
  border: 1px solid #aaadb2;
  font: inherit;
}

.values .disabled {
  background: #d8dbe0;
  color: #777;
}

.spin {
  display: flex;
  margin: 8px 0;
}

.values .spin input[type="text"] {
  width: 91px;
  height: 22px;
}

.spin-buttons {
  flex: 1;
  margin-left: 2px;
}

.spin-buttons button {
  width: 100%;
  height: 11px;
  border: 1px solid #c6c8cc;
}

.check {
  display: flex;
  align-items: center;
  gap: 4px;
}

.check input {
  width: 13px;
  height: 13px;
  margin: 0;
  accent-color: #5878b0;
}

.main-label {
  padding: 1px 0 1px 3px;
}

.values input.main-value {
  width: 56px;
  height: 22px;
  border-color: #fff;
  color: #202080;
}

.text-buttons {
  display: flex;
  gap: 3px;
  padding: 3px;
}

.text-buttons button {
  width: 24px;
  height: 22px;
  border: 1px solid #888;
}

.text-buttons .gap {
  margin-left: 18px;
}

.text-buttons .boxed {
  text-decoration: overline;
  text-decoration-color: #1848d0;
}

.scrollbar {
  display: flex;
  flex-direction: column;
  align-items: center;
  width: 16px;
  padding: 7px 0;
  background: #f0f0f2;
}

.scrollbar .thumb {
  display: flex;
  align-items: center;
  justify-content: center;
  width: 14px;
  height: 156px;
  margin: 7px 0 auto;
  border: 1px solid #999;
  border-radius: 2px;
  background: linear-gradient(to right, #f4f4f4, #c5c5c8);
  color: #555;
}

.canvas {
  position: relative;
  flex: 1;
  min-width: 0;
  overflow: hidden;
  background: #fff;
}

.drawing {
  overflow: hidden;
}

.caption {
  font-family: "Noto Sans CJK SC", sans-serif;
  font-weight: bold;
}

.caption-latin {
  font-family: "Liberation Sans", sans-serif;
  font-weight: bold;
}

.dimension {
  font-family: "Noto Sans", sans-serif;
}

.splitter {
  position: absolute;
  top: 198px;
  left: 0;
  flex-direction: column;
  gap: 3px;
  width: 7px;
  height: 38px;
  border: 1px solid #111;
  border-left: 0;
  background: #e2e5e9;
}

.splitter i {
  border: 3px solid transparent;
  border-left: 0;
  border-right-color: #222;
}

.view-tools {
  position: absolute;
  top: 7px;
  left: 125px;
  display: flex;
  align-items: center;
  gap: 6px;
}

.view-tools .tri {
  margin: 0 1px;
}

.task-pane {
  position: absolute;
  top: 39px;
  right: 0;
}

.task-pane button {
  width: 24px;
  height: 24px;
  border: 1px solid #111;
  border-width: 1px 0 1px 1px;
  background: #a9abaf;
}

.task-pane .active {
  background: #fff;
}

/* sheet tabs */

.sheet-bar {
  display: flex;
  flex: none;
  height: 14px;
  border-top: 1px solid #111;
  background: #e2e5e9;
  line-height: 13px;
}

.sheet-nav {
  display: flex;
}

.sheet-nav button {
  width: 16px;
  border: 1px solid #999;
  background: #b4b6ba;
}

.sheet-nav svg {
  fill: #85888e;
  stroke: #85888e;
}

.sheet {
  display: flex;
  align-items: center;
  gap: 2px;
  margin-top: -1px;
  padding: 0 11px;
  border: 1px solid #111;
  border-top: 0;
  background: #e2e5e9;
}

.add-sheet {
  width: 34px;
  border: 1px solid #111;
  border-width: 0 1px 1px 0;
  background: #a9abaf;
}

/* sketch tools */

.sketch-bar {
  flex: none;
  width: 46px;
  padding: 5px 2px 0 3px;
  border-bottom: 1px solid #888;
  background: #d8dbe0;
}

.grip {
  height: 9px;
  margin-right: 2px;
  border-top: 2px dotted #333;
}

.sketch-row {
  display: flex;
  align-items: center;
  gap: 10px;
  height: 23px;
  padding-left: 3px;
}

.sketch-row svg {
  width: 16px;
  height: 16px;
}

.sketch-bar hr {
  height: 1px;
  margin: 2px 0 4px;
  border: 0;
  background: #777a80;
}

.more-down {
  margin: 5px 0 0 16px;
}

/* lower toolbars */

.toolbar {
  display: flex;
  flex: none;
  align-items: center;
  gap: 7px;
  height: 31px;
  padding-left: 4px;
  border-bottom: 1px solid #999;
  background: #d8dbe0;
}

.toolbar svg {
  width: 16px;
  height: 16px;
}

.vgrip {
  width: 2px;
  height: 22px;
  margin-right: 2px;
  border-left: 2px dotted #333;
}

.bar-divider {
  width: 2px;
  height: 28px;
  margin-left: 4px;
  background: #f8f9fb;
}

.bar-divider.small {
  width: 1px;
  height: 18px;
  margin: 0 2px 0 -1px;
  background: #777;
}

.select-tool {
  display: flex;
  height: 23px;
  margin: 0 -3px 0 -2px;
}

.select-tool button {
  width: 27px;
  border: 1px solid #555;
  background: #b9bbc0;
}

.select-tool .arrow {
  width: 13px;
  border-left: 0;
  background: #d8dbe0;
}

.filter-end {
  display: flex;
  align-items: center;
  margin-left: auto;
}

.filter-end .more {
  width: 28px;
}

.status {
  display: flex;
  flex: none;
  align-items: center;
  height: 26px;
  padding: 0 3px 4px 2px;
  border-top: 1px solid #111;
  background: #d8dbe0;
  white-space: nowrap;
}

.hint {
  width: 246px;
}

.state {
  width: 66px;
}

.status-end {
  display: flex;
  align-items: flex-end;
  gap: 13px;
  margin-left: auto;
}

.resize {
  width: 9px;
  height: 9px;
  border-right: 2px dotted #aaa;
  border-bottom: 2px dotted #aaa;
}

/* context menu */

.context-menu {
  position: absolute;
  top: 357px;
  right: 51px;
  width: 236px;
  padding: 2px;
  border: 1px solid #8e9096;
  background: linear-gradient(to right, #e0e3e7 30px, #a5a7ac 30px, #a5a7ac 31px, #f0f0f5 31px);
  box-shadow: 3px 3px 2px #777a80;
}

.item {
  justify-content: flex-start;
  gap: 9px;
  width: 100%;
  height: 20px;
}

.menu-icon {
  display: flex;
  align-items: center;
  justify-content: center;
  width: 24px;
  height: 20px;
}

.pressed {
  border: 1px solid #555;
  background: #b9bbc0;
}

.sub::after {
  content: "";
  margin: 0 6px 4px auto;
  border: 4px solid transparent;
  border-left: 5px solid #111;
  border-right: 0;
}

.hover {
  background: linear-gradient(#f2f2f7, #cdcfda);
}

.context-menu hr {
  height: 1px;
  margin: 5px 0 4px 32px;
  border: 0;
  background: #999ba0;
}

.context-menu h4 {
  height: 20px;
  margin: 0;
  padding: 2px;
  background: linear-gradient(#d8dae4, #a9acba 60%, #d0d2dc);
  font-size: 12px;
  font-weight: bold;
}

.callouts {
  position: absolute;
  top: -1px;
  left: -58px;
  pointer-events: none;
}
```
